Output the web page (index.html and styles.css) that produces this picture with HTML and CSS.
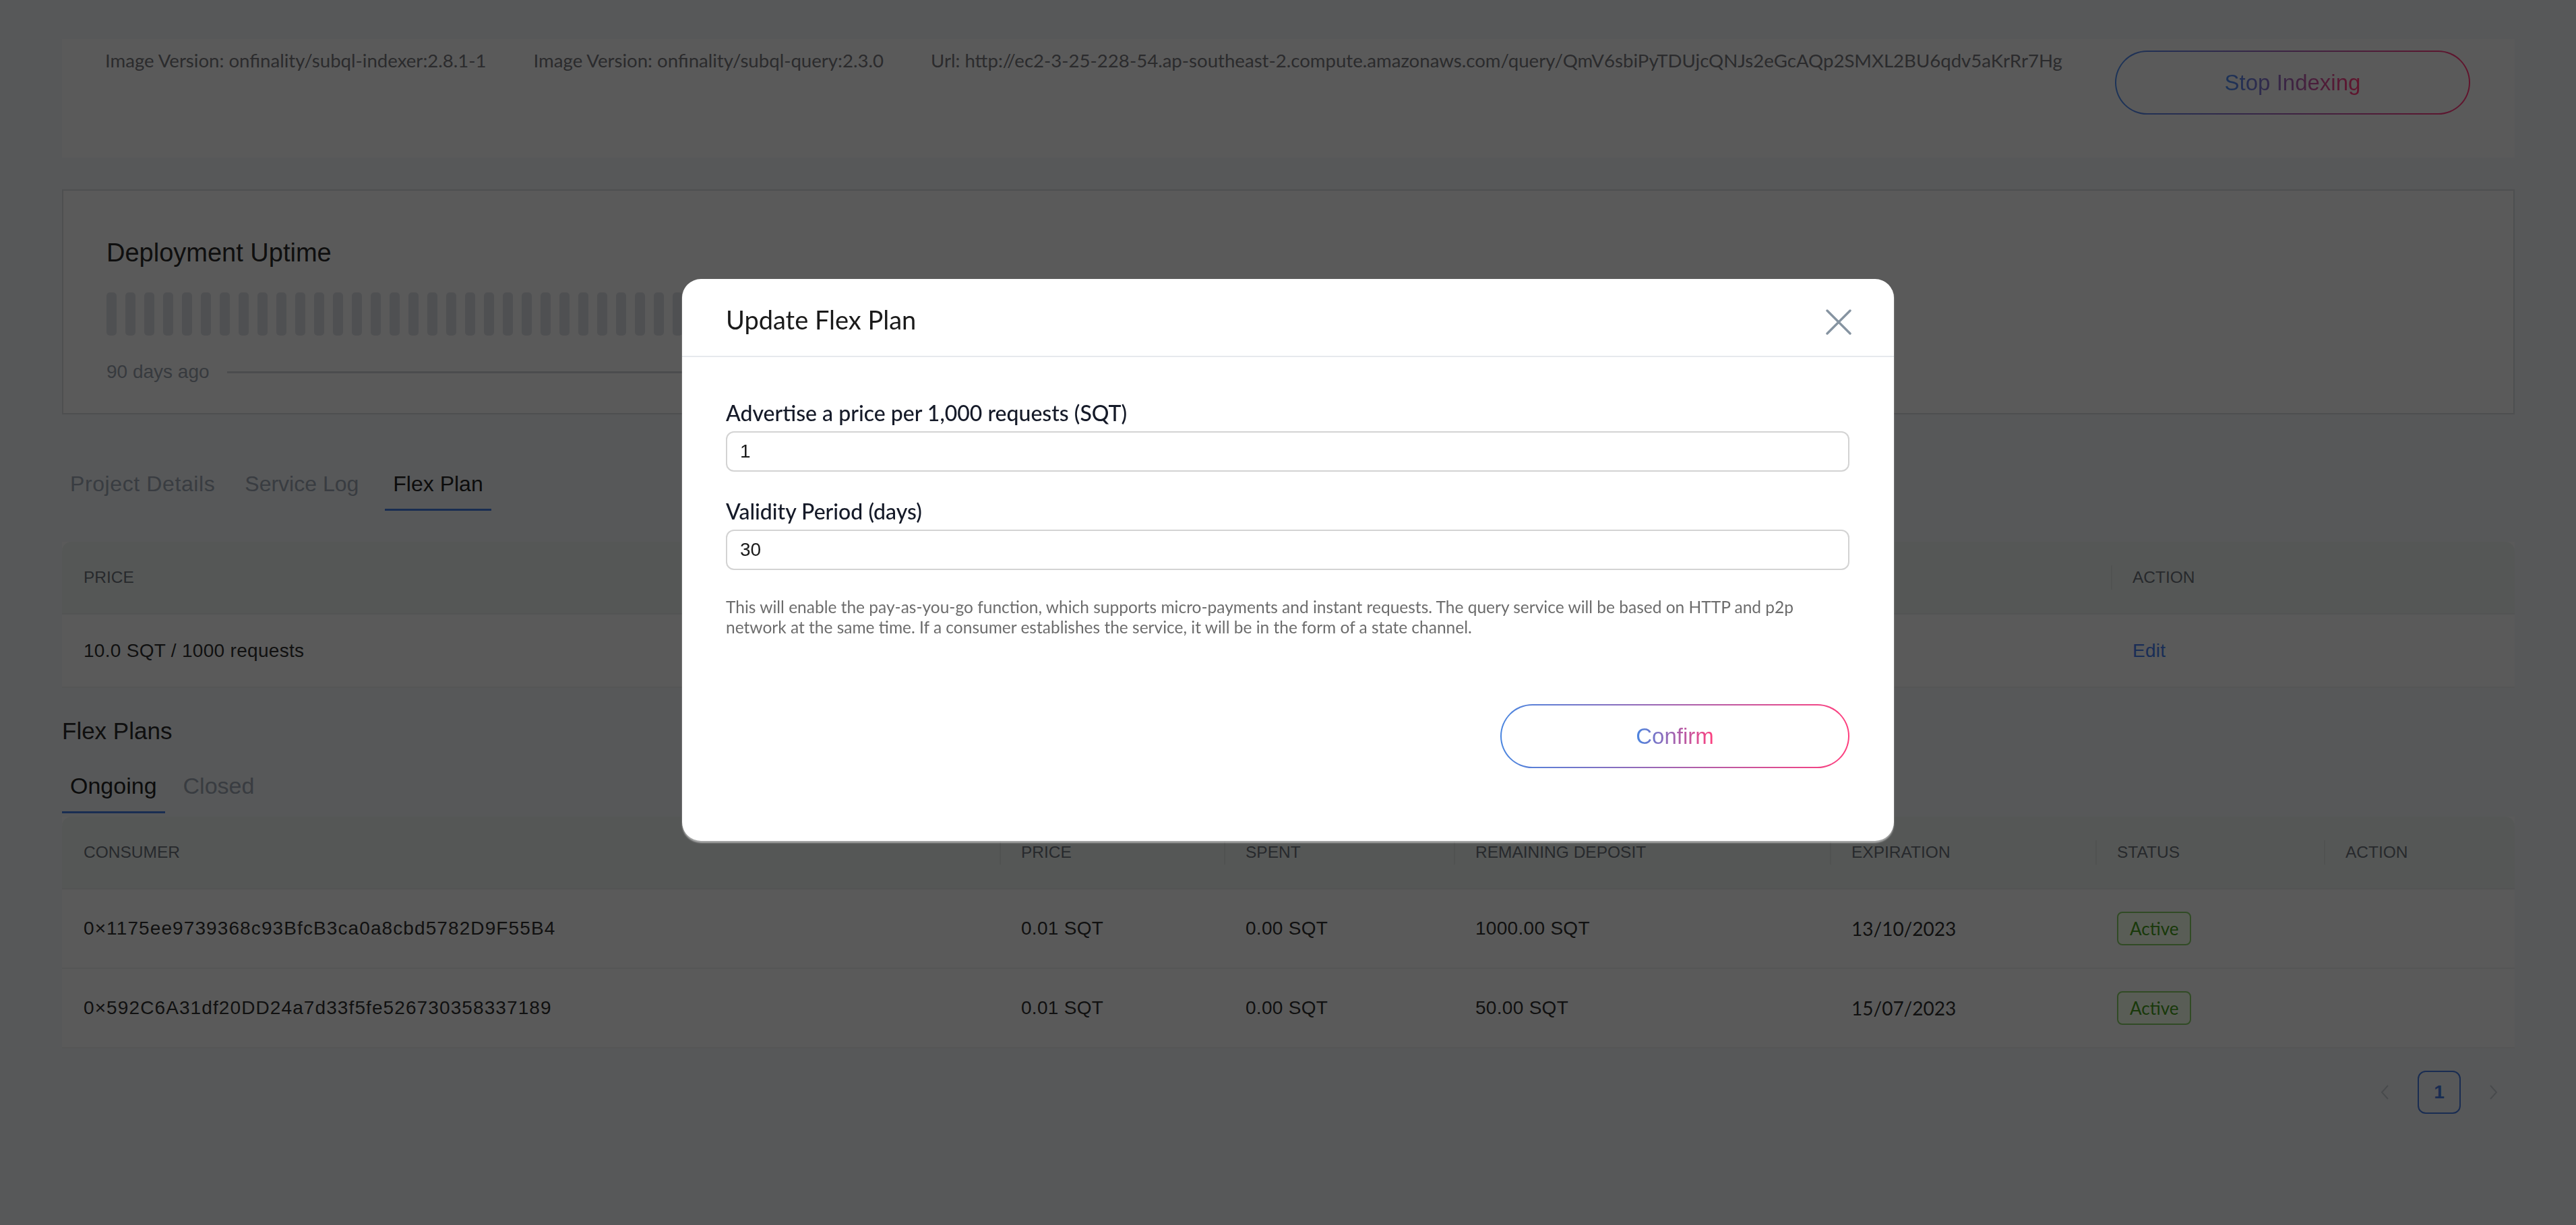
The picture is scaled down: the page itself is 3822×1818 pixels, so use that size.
FILE: index.html
```html
<!DOCTYPE html>
<html lang="en">
<head>
<meta charset="utf-8">
<title>Flex Plan</title>
<link rel="stylesheet" href="styles.css">
</head>
<body>
<div class="page">
  <section class="card info">
    <div class="info-texts">
      <span>Image Version: onfinality/subql-indexer:2.8.1-1</span>
      <span>Image Version: onfinality/subql-query:2.3.0</span>
      <span>Url: http://ec2-3-25-228-54.ap-southeast-2.compute.amazonaws.com/query/QmV6sbiPyTDUjcQNJs2eGcAQp2SMXL2BU6qdv5aKrRr7Hg</span>
    </div>
    <button class="grad-btn on-card"><span>Stop Indexing</span></button>
  </section>

  <section class="card uptime">
    <h3 class="uptime-title">Deployment Uptime</h3>
    <div class="bars">
      <i></i><i></i><i></i><i></i><i></i><i></i><i></i><i></i><i></i><i></i>
      <i></i><i></i><i></i><i></i><i></i><i></i><i></i><i></i><i></i><i></i>
      <i></i><i></i><i></i><i></i><i></i><i></i><i></i><i></i><i></i><i></i>
      <i></i><i></i><i></i><i></i><i></i><i></i><i></i><i></i><i></i><i></i>
      <i></i><i></i><i></i><i></i><i></i><i></i><i></i><i></i><i></i><i></i>
      <i></i><i></i><i></i><i></i><i></i><i></i><i></i><i></i><i></i><i></i>
      <i></i><i></i><i></i><i></i><i></i><i></i><i></i><i></i><i></i><i></i>
      <i></i><i></i><i></i><i></i><i></i><i></i><i></i><i></i><i></i><i></i>
      <i></i><i></i><i></i><i></i><i></i><i></i><i></i><i></i><i></i><i></i>
    </div>
    <div class="axis"><span>90 days ago</span><b class="axis-line"></b><span>Today</span></div>
  </section>

  <nav class="tabs main-tabs">
    <span class="tab">Project Details</span>
    <span class="tab">Service Log</span>
    <span class="tab active">Flex Plan</span>
  </nav>

  <table class="tbl t1">
    <colgroup><col class="c-price"><col class="c-action1"></colgroup>
    <thead><tr><th>PRICE</th><th>ACTION</th></tr></thead>
    <tbody><tr><td>10.0 SQT / 1000 requests</td><td><span class="link">Edit</span></td></tr></tbody>
  </table>

  <h3 class="section-title">Flex Plans</h3>

  <nav class="tabs sub-tabs">
    <span class="tab active">Ongoing</span>
    <span class="tab">Closed</span>
  </nav>

  <table class="tbl t2">
    <colgroup>
      <col class="w-consumer"><col class="w-price"><col class="w-spent"><col class="w-dep"><col class="w-exp"><col class="w-status"><col>
    </colgroup>
    <thead>
      <tr><th>CONSUMER</th><th>PRICE</th><th>SPENT</th><th>REMAINING DEPOSIT</th><th>EXPIRATION</th><th>STATUS</th><th>ACTION</th></tr>
    </thead>
    <tbody>
      <tr><td class="addr">0×1175ee9739368c93BfcB3ca0a8cbd5782D9F55B4</td><td>0.01 SQT</td><td>0.00 SQT</td><td>1000.00 SQT</td><td class="date">13/10/2023</td><td><span class="tag">Active</span></td><td></td></tr>
      <tr><td class="addr">0×592C6A31df20DD24a7d33f5fe526730358337189</td><td>0.01 SQT</td><td>0.00 SQT</td><td>50.00 SQT</td><td class="date">15/07/2023</td><td><span class="tag">Active</span></td><td></td></tr>
    </tbody>
  </table>

  <div class="pagination">
    <span class="pg-arrow"><svg width="18" height="24" viewBox="0 0 18 24"><polyline points="13,2 4,12 13,22" fill="none" stroke="#b4b8be" stroke-width="2"/></svg></span>
    <span class="pg-item">1</span>
    <span class="pg-arrow"><svg width="18" height="24" viewBox="0 0 18 24"><polyline points="5,2 14,12 5,22" fill="none" stroke="#b4b8be" stroke-width="2"/></svg></span>
  </div>
</div>

<div class="mask"></div>

<div class="modal-wrap">
  <div class="modal">
    <div class="modal-header">
      <h2 class="modal-title">Update Flex Plan</h2>
      <svg class="close" width="40" height="38" viewBox="0 0 40 38"><path d="M3 2 L37 36 M37 2 L3 36" stroke="#8694a1" stroke-width="3.4" stroke-linecap="round" fill="none"/></svg>
    </div>
    <div class="modal-body">
      <div class="field">
        <label class="label">Advertise a price per 1,000 requests (SQT)</label>
        <div class="input">1</div>
      </div>
      <div class="field">
        <label class="label">Validity Period (days)</label>
        <div class="input">30</div>
      </div>
      <p class="desc">This will enable the pay-as-you-go function, which supports micro-payments and instant requests. The query service will be based on HTTP and p2p<br>network at the same time. If a consumer establishes the service, it will be in the form of a state channel.</p>
      <div class="modal-footer">
        <button class="grad-btn confirm"><span>Confirm</span></button>
      </div>
    </div>
  </div>
</div>
</body>
</html>
```

FILE: styles.css
```css
* { box-sizing: border-box; margin: 0; padding: 0; }
html, body { width: 3822px; height: 1818px; overflow: hidden; }
body {
  background: #d9dcde;
  font-family: "Liberation Sans", Arial, sans-serif;
  color: #262626;
}
.page { padding: 58px 91px 0 92px; }

.card { background: #e2e2e2; }

/* info card */
.info {
  height: 176px;
  display: flex;
  justify-content: space-between;
  align-items: flex-start;
  padding: 12px 66px 0 64px;
}
.info-texts {
  display: flex;
  gap: 70px;
  font-family: Lato, "Open Sans", sans-serif;
  font-size: 27.6px;
  line-height: 40px;
  color: #6c6c70;
  white-space: nowrap;
}

.grad-btn {
  width: 527px;
  height: 95px;
  border-radius: 48px;
  border: 2px solid transparent;
  background: linear-gradient(#fff, #fff) padding-box, linear-gradient(90deg, #4a86e0, #ff3f7e) border-box;
  font-family: "Liberation Sans", Arial, sans-serif;
  font-size: 33px;
  display: flex;
  align-items: center;
  justify-content: center;
}
.grad-btn span {
  background: linear-gradient(90deg, #4a86e0, #ff3f7e);
  -webkit-background-clip: text;
  background-clip: text;
  color: transparent;
}
.grad-btn.on-card {
  margin-top: 5px;
  background: linear-gradient(#e2e2e2, #e2e2e2) padding-box, linear-gradient(90deg, #4580dc, #f2336f) border-box;
}
.grad-btn.on-card span {
  background: linear-gradient(90deg, #4580dc, #f2336f);
  -webkit-background-clip: text;
  background-clip: text;
}

/* uptime */
.uptime {
  margin-top: 47px;
  height: 334px;
  border: 2px solid #c3c5c8;
  padding: 69px 64px 0 64px;
}
.uptime-title {
  font-size: 38px;
  line-height: 46px;
  font-weight: 400;
  color: #262626;
}
.bars { display: flex; gap: 13px; margin-top: 36px; height: 64px; }
.bars i { width: 15px; height: 64px; border-radius: 5px; background: #c6c8cc; }
.axis {
  display: flex;
  align-items: center;
  gap: 26px;
  margin-top: 37px;
  width: 2507px;
  font-size: 28px;
  line-height: 34px;
  color: #8a919c;
}
.axis-line { flex: 1; height: 3px; background: #bcbfc3; }

/* tabs */
.tabs { display: flex; }
.main-tabs { margin-top: 83px; gap: 20px; }
.main-tabs .tab.active { margin-left: 7px; }
.sub-tabs { margin-top: 39px; gap: 15px; }
.tab {
  padding: 0 12px 17px;
  line-height: 40px;
  font-size: 32px;
  color: #8e97a2;
  border-bottom: 3px solid transparent;
}
.main-tabs .tab:first-child { letter-spacing: 0.6px; }
.sub-tabs .tab { padding-bottom: 18px; font-size: 34px; }
.tab.active { color: #1f1f1f; border-bottom-color: #3f72cc; }

/* tables */
.tbl {
  width: 100%;
  border-collapse: separate;
  border-spacing: 0;
  table-layout: fixed;
  background: #e2e2e2;
}
.t1 { margin-top: 46px; }
.t2 { margin-top: 5px; }
.c-action1 { width: 599px; }
.w-consumer { width: 1391px; }
.w-price { width: 333px; }
.w-spent { width: 341px; }
.w-dep { width: 558px; }
.w-exp { width: 394px; }
.w-status { width: 339px; }

.tbl th {
  height: 108px;
  background: #d5dad8;
  text-align: left;
  font-weight: 400;
  font-size: 24.5px;
  color: #62686f;
  padding: 0 32px;
  position: relative;
  border-bottom: 2px solid #cfd1d1;
}
.tbl th:first-child { border-top-left-radius: 14px; }
.tbl th:last-child { border-top-right-radius: 14px; }
.tbl th + th::before {
  content: "";
  position: absolute;
  left: 0;
  top: 50%;
  width: 2px;
  height: 36px;
  margin-top: -18px;
  background: #c8cccb;
}
.tbl td {
  height: 109px;
  padding: 0 32px;
  font-size: 28px;
  letter-spacing: 0.3px;
  color: #2b2b2b;
  border-bottom: 2px solid #d5d6d6;
  white-space: nowrap;
}
.t2 td { height: 118px; }
.tbl td.addr { letter-spacing: 1.1px; }
.tbl td.date { font-family: Lato, sans-serif; letter-spacing: 0; }
.link { color: #3f72d6; }

.tag {
  display: inline-block;
  height: 50px;
  line-height: 46px;
  padding: 0 17px;
  border: 2px solid #7cbb5e;
  border-radius: 8px;
  background: #dfe9d8;
  color: #3f8f1a;
  font-family: Lato, sans-serif;
  font-size: 26px;
  letter-spacing: 0;
}

.section-title {
  margin-top: 42px;
  font-size: 35px;
  line-height: 44px;
  font-weight: 400;
  color: #262626;
}

/* pagination */
.pagination {
  display: flex;
  justify-content: flex-end;
  gap: 16px;
  margin-top: 33px;
}
.pg-arrow, .pg-item {
  width: 64px;
  height: 64px;
  display: flex;
  align-items: center;
  justify-content: center;
}
.pg-item {
  border: 2px solid #3f6fcc;
  border-radius: 12px;
  color: #3f6fcc;
  font-size: 28px;
  font-weight: 700;
}

/* modal */
.mask {
  position: fixed;
  inset: 0;
  background: rgba(0, 0, 0, 0.6);
}
.modal-wrap {
  position: fixed;
  inset: 0;
  display: flex;
  justify-content: center;
  align-items: flex-start;
  padding-top: 414px;
}
.modal {
  width: 1798px;
  height: 834px;
  background: #fff;
  border-radius: 28px;
  box-shadow: 0 3px 2px rgba(220, 220, 220, 0.6);
}
.modal-header {
  display: flex;
  justify-content: space-between;
  align-items: center;
  padding: 36px 62px 30px 65px;
  border-bottom: 2px solid #e6e9ed;
}
.modal-title {
  font-family: Lato, "Open Sans", sans-serif;
  font-size: 38px;
  line-height: 48px;
  font-weight: 400;
  color: #1a1a1a;
}
.close { margin-top: 8px; }
.modal-body { padding: 64px 66px 0 65px; }
.field + .field { margin-top: 40px; }
.label {
  display: block;
  font-family: Lato, "Open Sans", sans-serif;
  font-size: 32px;
  line-height: 38px;
  font-weight: 500;
  color: #151a28;
  margin-bottom: 8px;
}
.input {
  height: 60px;
  border: 2px solid #d3d3d3;
  border-radius: 12px;
  padding: 0 19px;
  font-size: 28px;
  line-height: 56px;
  color: #1a1a1a;
}
.desc {
  margin-top: 40px;
  font-family: Lato, "Open Sans", sans-serif;
  font-size: 24.5px;
  line-height: 30px;
  color: #6c6c6c;
  white-space: nowrap;
}
.modal-footer {
  display: flex;
  justify-content: flex-end;
  margin-top: 99px;
}
.confirm { width: 518px; }
```
